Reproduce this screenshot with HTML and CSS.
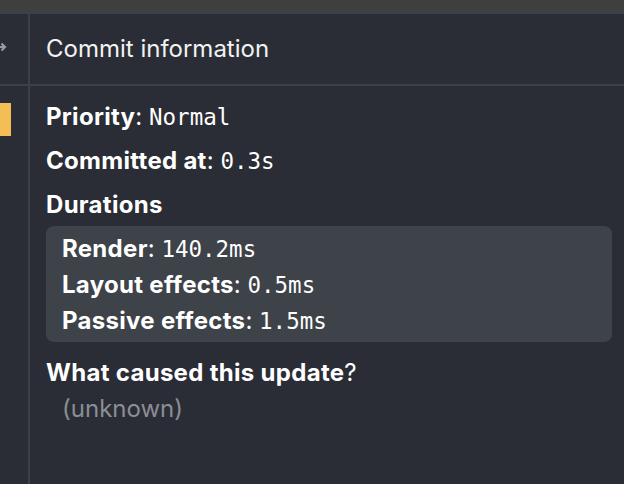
FILE: index.html
```html
<!DOCTYPE html>
<html>
<head>
<meta charset="utf-8">
<link rel="stylesheet" href="styles.css">
</head>
<body>
<div class="topbar"></div>
<div class="layout">
  <div class="side">
    <div class="side-head">
      <svg class="arrow" width="10" height="12" viewBox="0 0 10 12"><path d="M-4 6H4.5M1.5 2.5L5 6L1.5 9.5" fill="none" stroke="#9b9b9b" stroke-width="2.2"/></svg>
    </div>
    <div class="side-body"><div class="bar"></div></div>
  </div>
  <div class="main">
    <div class="head">Commit information</div>
    <div class="content">
      <div class="row"><b>Priority</b>: <span class="mono">Normal</span></div>
      <div class="row gap"><b>Committed at</b>: <span class="mono">0.3s</span></div>
      <div class="row gap"><b>Durations</b></div>
      <div class="box">
        <div class="row"><b>Render</b>: <span class="mono">140.2ms</span></div>
        <div class="row"><b>Layout effects</b>: <span class="mono">0.5ms</span></div>
        <div class="row"><b>Passive effects</b>: <span class="mono">1.5ms</span></div>
      </div>
      <div class="row cause"><b>What caused this update</b>?</div>
      <div class="row unknown">(unknown)</div>
    </div>
  </div>
</div>
</body>
</html>
```
FILE: styles.css
```css
html, body { margin: 0; padding: 0; }
body {
  background: #2a2d35;
  color: #ffffff;
  font-family: Inter, "Liberation Sans", sans-serif;
  width: 624px;
  height: 484px;
  overflow: hidden;
}
.topbar {
  height: 10px;
  background: #3f3f3f;
  border-bottom: 4px solid #3d4047;
}
.layout {
  display: flex;
  height: 470px;
}
.side {
  width: 28px;
  border-right: 2px solid #3d4047;
  flex: none;
}
.side-head {
  height: 70px;
  border-bottom: 2px solid #3d4047;
  display: flex;
  align-items: center;
}
.arrow { display: block; margin-top: -4px; }
.side-body { padding-top: 17px; }
.bar {
  width: 11px;
  height: 33px;
  background: #f4bd55;
}
.main { flex: 1; min-width: 0; }
.head {
  height: 70px;
  border-bottom: 2px solid #3d4047;
  font-size: 24px;
  line-height: 70px;
  padding-left: 16px;
  color: #f2f2f2;
}
.content {
  padding: 13px 12px 0 16px;
}
.row {
  font-size: 24px;
  line-height: 36px;
  white-space: nowrap;
}
.row b { font-weight: 700; letter-spacing: 0.3px; }
.gap { margin-top: 8px; }
.mono {
  font-family: "DejaVu Sans Mono", "Liberation Mono", monospace;
  font-size: 22.5px;
  line-height: 20px;
}
.box {
  background: #3e4249;
  border-radius: 8px;
  margin: 3px 0 0 0;
  padding: 5px 16px 3px 16px;
}
.cause { margin-top: 13px; }
.unknown {
  color: #8b8e95;
  padding-left: 16px;
}
```
